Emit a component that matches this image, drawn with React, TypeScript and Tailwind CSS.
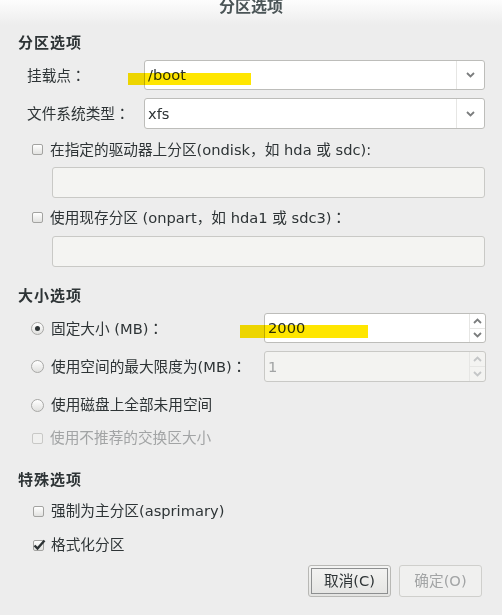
import type { ReactNode } from 'react';

const font = { fontFamily: '"DejaVu Sans", "Noto Sans CJK SC", sans-serif' };

// full-width punctuation should come from the CJK face, not DejaVu
function F({ children, centered = false }: { children: ReactNode; centered?: boolean }) {
  return (
    <span style={{ fontFamily: centered ? '"Noto Sans CJK TC", sans-serif' : '"Noto Sans CJK SC", sans-serif' }}>
      {children}
    </span>
  );
}

const Colon = () => <F centered>：</F>;

function Chevron({ up = false, className = '' }: { up?: boolean; className?: string }) {
  return (
    <svg width="9" height="6" viewBox="0 0 9 6" className={className}>
      <path
        d={up ? 'M1 5 L4.5 1.5 L8 5' : 'M1 1 L4.5 4.5 L8 1'}
        fill="none"
        stroke="currentColor"
        strokeWidth="1.8"
      />
    </svg>
  );
}

function CheckBox({ checked = false, disabled = false }: { checked?: boolean; disabled?: boolean }) {
  return (
    <span
      className={`relative inline-block w-[11px] h-[11px] rounded-[2px] border ${
        disabled ? 'border-[#c8c8c6] bg-[#f0f0ef]' : 'border-[#a3a3a1] bg-gradient-to-b from-white to-[#e2e2e0]'
      }`}
    >
      {checked && (
        <svg width="13" height="12" viewBox="0 0 13 12" className="absolute -left-[1px] -top-[2px]">
          <path d="M1.5 6.5 L4.5 9.5 L11.5 1.5" fill="none" stroke="#2e3436" strokeWidth="2.4" />
        </svg>
      )}
    </span>
  );
}

function Radio({ checked = false }: { checked?: boolean }) {
  return (
    <span className="flex items-center justify-center w-[13px] h-[13px] rounded-full border border-[#a8a8a6] bg-gradient-to-b from-white to-[#e0e0de]">
      {checked && <span className="w-[5px] h-[5px] rounded-full bg-[#2e3436]" />}
    </span>
  );
}

function Combo({ value }: { value: string }) {
  return (
    <div className="flex w-[341px] h-full rounded-[3px] border border-[#bdbdba] bg-white">
      <div className="flex-1 flex items-center pl-[3px] text-[14.67px] text-[#2e3436]">{value}</div>
      <div className="w-[28px] flex items-center justify-center border-l border-[#e6e6e4] text-[#7b7d7e]">
        <Chevron />
      </div>
    </div>
  );
}

function Spin({ value, disabled = false }: { value: string; disabled?: boolean }) {
  return (
    <div
      className={`flex w-[222px] h-full rounded-[3px] border ${
        disabled ? 'border-[#c9c9c6] bg-[#f3f3f1]' : 'border-[#bdbdba] bg-white'
      }`}
    >
      <div className={`flex-1 flex items-center pl-[3px] text-[14.67px] ${disabled ? 'text-[#a2a4a5]' : 'text-[#2e3436]'}`}>
        {value}
      </div>
      <div className={`w-[16px] flex flex-col border-l border-[#e6e6e4] ${disabled ? 'text-[#c4c6c7]' : 'text-[#7b7d7e]'}`}>
        <div className="flex-1 flex items-center justify-center border-b border-[#e6e6e4]">
          <Chevron up />
        </div>
        <div className="flex-1 flex items-center justify-center">
          <Chevron />
        </div>
      </div>
    </div>
  );
}

function Header({ children, className = '' }: { children: ReactNode; className?: string }) {
  return (
    <div className={`h-[20px] pl-[18px] flex items-center text-[15px] tracking-[1px] font-bold text-[#2e3436] ${className}`}>
      {children}
    </div>
  );
}

export default function App() {
  return (
    <div style={font} className="relative w-[502px] h-[615px] bg-[#ededed] text-[#2e3436] text-[14.67px] overflow-hidden">
      <div className="h-[25px] bg-gradient-to-b from-[#fdfdfd] to-[#ededed] flex justify-center">
        <span className="-mt-[2px] leading-[18px] text-[16px] font-bold text-[#4b5557]">分区选项</span>
      </div>

      <Header className="mt-[8px]">分区选项</Header>

      <div className="mt-[7px] h-[30px] flex items-center">
        <span className="w-[144px] pl-[27px]">
          挂载点<Colon />
        </span>
        <Combo value="/boot" />
      </div>
      <div className="mt-[8px] h-[31px] flex items-center">
        <span className="w-[144px] pl-[27px]">
          文件系统类型<Colon />
        </span>
        <Combo value="xfs" />
      </div>

      <div className="mt-[10px] h-[20px] flex items-center pl-[32px] gap-[7px]">
        <CheckBox />
        <span>
          在指定的驱动器上分区(ondisk<F>，</F>如 hda 或 sdc):
        </span>
      </div>
      <div className="mt-[8px] ml-[52px] w-[433px] h-[31px] rounded-[3px] border border-[#c9c9c6] bg-[#f4f4f2]" />

      <div className="mt-[9px] h-[20px] flex items-center pl-[32px] gap-[7px]">
        <CheckBox />
        <span>
          使用现存分区 (onpart<F>，</F>如 hda1 或 sdc3)<Colon />
        </span>
      </div>
      <div className="mt-[9px] ml-[52px] w-[433px] h-[31px] rounded-[3px] border border-[#c9c9c6] bg-[#f4f4f2]" />

      <Header className="mt-[19px]">大小选项</Header>

      <div className="mt-[7px] h-[30px] flex items-center">
        <div className="w-[264px] pl-[31px] flex items-center gap-[7px]">
          <Radio checked />
          <span>
            固定大小 (MB)<Colon />
          </span>
        </div>
        <Spin value="2000" />
      </div>
      <div className="mt-[8px] h-[31px] flex items-center">
        <div className="w-[264px] pl-[31px] flex items-center gap-[7px]">
          <Radio />
          <span>
            使用空间的最大限度为(MB)<Colon />
          </span>
        </div>
        <Spin value="1" disabled />
      </div>
      <div className="mt-[13px] h-[20px] flex items-center pl-[31px] gap-[7px]">
        <Radio />
        <span>使用磁盘上全部未用空间</span>
      </div>
      <div className="mt-[13px] h-[20px] flex items-center pl-[32px] gap-[7px] text-[#a2a4a5]">
        <CheckBox disabled />
        <span>使用不推荐的交换区大小</span>
      </div>

      <Header className="mt-[22px]">特殊选项</Header>

      <div className="mt-[11px] h-[20px] flex items-center pl-[33px] gap-[7px]">
        <CheckBox />
        <span>强制为主分区(asprimary)</span>
      </div>
      <div className="mt-[14px] h-[20px] flex items-center pl-[33px] gap-[7px]">
        <CheckBox checked />
        <span>格式化分区</span>
      </div>

      <div className="mt-[10px] flex justify-end gap-[8px] pr-[20px]">
        <button className="w-[83px] h-[32px] rounded-[3px] border border-[#b8b8b5] bg-gradient-to-b from-[#f4f4f3] to-[#e4e4e2] p-[2px]">
          <span className="flex h-full w-full items-center justify-center border border-[#8d8f90] text-[#2e3436]">
            取消(C)
          </span>
        </button>
        <button className="w-[83px] h-[32px] rounded-[3px] border border-[#cfcfcc] bg-[#f0f0ef] text-[#a2a4a5]">
          确定(O)
        </button>
      </div>

      <div className="absolute left-[128px] top-[73px] w-[123px] h-[12px] bg-[#ffe600] mix-blend-multiply" />
      <div className="absolute left-[240px] top-[325px] w-[128px] h-[13px] bg-[#ffe600] mix-blend-multiply" />
    </div>
  );
}
